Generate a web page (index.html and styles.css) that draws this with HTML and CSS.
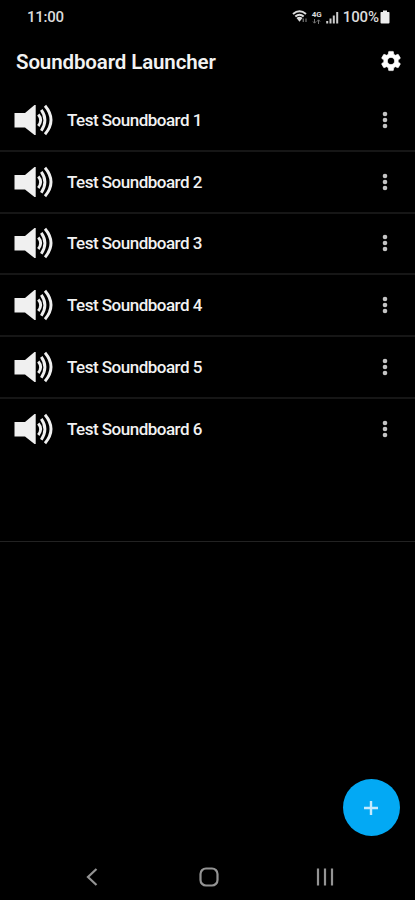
FILE: index.html
```html
<!DOCTYPE html>
<html lang="en">
<head>
  <meta charset="UTF-8">
  <meta name="viewport" content="width=device-width, initial-scale=1">
  <title>Soundboard Launcher</title>
  <link rel="stylesheet" href="styles.css">
</head>
<body>
  <!-- Shared icons -->
  <svg class="sprite">
    <symbol id="speaker" viewBox="0 0 40 32">
      <path d="M0.5 9H11L20.5 1H21.7V31H20.5L11 23.5H0.5Z" fill="#f0f0f0"/>
      <path d="M24.3 10.5Q29 16 24.3 22M27.3 5.8Q34.5 16 27.3 26.7M31 1.8Q43 16 31 30.3" fill="none" stroke="#f0f0f0" stroke-width="2.9"/>
    </symbol>
    <symbol id="dots" viewBox="0 0 6 18">
      <circle cx="3" cy="3" r="2.3"/>
      <circle cx="3" cy="9" r="2.3"/>
      <circle cx="3" cy="15" r="2.3"/>
    </symbol>
  </svg>

  <!-- Status bar -->
  <div class="status-bar">
    <span class="clock">11:00</span>
    <div class="status-icons">
      <svg class="wifi" width="17" height="14" viewBox="0 0 17 14">
        <path d="M1 4Q7.5 -1.5 14 4M3.3 6.6Q7.5 3 11.7 6.6" fill="none" stroke="#ddd" stroke-width="2"/>
        <path d="M4.5 8Q7.5 5.5 10.5 8L7.5 11.8Z" fill="#ddd"/>
        <path d="M11.3 12V8.5M14 8.5V12" stroke="#666" stroke-width="1.4"/>
      </svg>
      <div class="network">
        <b>4G</b>
        <svg width="9" height="5" viewBox="0 0 9 5">
          <path d="M2.5 0V4M1 2.5L2.5 4.2L4 2.5M6.5 5V1M5 2.5L6.5 0.8L8 2.5" fill="none" stroke="#777"/>
        </svg>
      </div>
      <svg class="signal" width="13" height="13" viewBox="0 0 13 13">
        <path d="M1.2 12.5V10M4.5 12.5V7.5M7.8 12.5V4.5M11.2 12.5V1" stroke="#ccc" stroke-width="2"/>
      </svg>
      <span class="percent">100%</span>
      <svg class="battery" width="10" height="14" viewBox="0 0 10 14">
        <path d="M3 0.5H7V2H9Q9.5 2 9.5 3V12.5Q9.5 13.5 8.5 13.5H1.5Q0.5 13.5 0.5 12.5V3Q0.5 2 1 2H3Z" fill="#eee"/>
      </svg>
    </div>
  </div>

  <!-- Header -->
  <header class="app-bar">
    <h1>Soundboard Launcher</h1>
    <svg class="settings" width="24" height="24" viewBox="0 0 24 24">
      <path fill="#fff" stroke="#fff" stroke-width="0.6" d="M19.14 12.94c.04-.3.06-.61.06-.94 0-.32-.02-.64-.07-.94l2.03-1.58c.18-.14.23-.41.12-.61l-1.92-3.32c-.12-.22-.37-.29-.59-.22l-2.39.96c-.5-.38-1.03-.7-1.62-.94l-.36-2.54c-.04-.24-.24-.41-.48-.41h-3.84c-.24 0-.43.17-.47.41l-.36 2.54c-.59.24-1.13.57-1.62.94l-2.39-.96c-.22-.08-.47 0-.59.22L2.74 8.87c-.12.21-.08.47.12.61l2.03 1.58c-.05.3-.09.63-.09.94s.02.64.07.94l-2.03 1.58c-.18.14-.23.41-.12.61l1.92 3.32c.12.22.37.29.59.22l2.39-.96c.5.38 1.03.7 1.62.94l.36 2.54c.05.24.24.41.48.41h3.84c.24 0 .44-.17.47-.41l.36-2.54c.59-.24 1.13-.56 1.62-.94l2.39.96c.22.08.47 0 .59-.22l1.92-3.32c.12-.22.07-.47-.12-.61l-2.01-1.58zM12 15.6c-1.98 0-3.6-1.62-3.6-3.6s1.62-3.6 3.6-3.6 3.6 1.62 3.6 3.6-1.62 3.6-3.6 3.6z"/>
    </svg>
  </header>

  <!-- Soundboards -->
  <main>
    <ul class="board-list">
      <li><svg class="speaker"><use href="#speaker"/></svg><span>Test Soundboard 1</span><svg class="dots"><use href="#dots"/></svg></li>
      <li><svg class="speaker"><use href="#speaker"/></svg><span>Test Soundboard 2</span><svg class="dots"><use href="#dots"/></svg></li>
      <li><svg class="speaker"><use href="#speaker"/></svg><span>Test Soundboard 3</span><svg class="dots"><use href="#dots"/></svg></li>
      <li><svg class="speaker"><use href="#speaker"/></svg><span>Test Soundboard 4</span><svg class="dots"><use href="#dots"/></svg></li>
      <li><svg class="speaker"><use href="#speaker"/></svg><span>Test Soundboard 5</span><svg class="dots"><use href="#dots"/></svg></li>
      <li><svg class="speaker"><use href="#speaker"/></svg><span>Test Soundboard 6</span><svg class="dots"><use href="#dots"/></svg></li>
    </ul>
  </main>

  <button class="add-button" aria-label="Add">
    <svg width="16" height="16" viewBox="0 0 16 16">
      <path d="M8 1V15M1 8H15" stroke="#c5eafd" stroke-width="2.4"/>
    </svg>
  </button>

  <!-- System navigation -->
  <nav class="system-nav">
    <svg width="20" height="20" viewBox="0 0 20 20"><path d="M14.5 2L6 10L14.5 18"/></svg>
    <svg width="20" height="20" viewBox="0 0 20 20"><rect x="1.5" y="1.5" width="17" height="17" rx="5.5"/></svg>
    <svg width="20" height="20" viewBox="0 0 20 20"><path d="M3 1.5V18.5M10 1.5V18.5M17 1.5V18.5"/></svg>
  </nav>
</body>
</html>
```
FILE: styles.css
```css
/* General Styles */
body {
  font-family: Roboto, sans-serif;
  margin: 0;
  height: 900px;
  background-color: #000;
  color: #f2f2f2;
  display: flex;
  flex-direction: column;
  overflow: hidden;
}

.sprite {
  display: none;
}

/* Status bar */
.status-bar {
  display: flex;
  justify-content: space-between;
  align-items: center;
  height: 34px;
  padding: 0 25px 0 27px;
  font-size: 15px;
  color: #dcdcdc;
}

.clock {
  font-weight: 500;
  letter-spacing: -0.25px;
}

.status-icons {
  display: flex;
  align-items: center;
}

.network {
  display: flex;
  flex-direction: column;
  align-items: center;
  width: 12px;
  margin: 0 3px 0 2px;
  font-size: 8px;
  line-height: 8px;
}

.percent {
  margin: 0 1px 0 4px;
  font-weight: 500;
  letter-spacing: -0.1px;
}

/* Header */
.app-bar {
  display: flex;
  justify-content: space-between;
  align-items: center;
  box-sizing: border-box;
  height: 56px;
  padding: 0 12px 2px 16px;
}

.app-bar h1 {
  margin: 1px 0 0;
  font-size: 20.5px;
  font-weight: 600;
  letter-spacing: -0.12px;
}

/* Soundboards */
main {
  height: 451px;
  border-bottom: 1px solid #222;
}

.board-list {
  list-style: none;
  margin: 0;
  padding: 0;
}

.board-list li {
  display: flex;
  align-items: center;
  box-sizing: border-box;
  height: 61.8px;
  padding: 0 27px 0 14px;
  border-bottom: 2px solid #161616;
  font-size: 17px;
  font-weight: 500;
  letter-spacing: -0.5px;
}

.board-list li:last-child {
  border-bottom-color: transparent;
}

.board-list span {
  flex: 1;
}

.speaker {
  width: 40px;
  height: 32px;
  margin-right: 13px;
}

.dots {
  width: 6px;
  height: 18px;
  fill: #c4c4c4;
}

/* Floating button */
.add-button {
  position: absolute;
  right: 15.5px;
  bottom: 64px;
  width: 57px;
  height: 57px;
  padding: 0;
  border: none;
  border-radius: 50%;
  background-color: #03a9f4;
  display: flex;
  justify-content: center;
  align-items: center;
}

/* System navigation */
.system-nav {
  display: flex;
  justify-content: space-between;
  align-items: center;
  height: 46px;
  margin-top: auto;
  padding: 0 80px 0 82px;
}

.system-nav svg {
  fill: none;
  stroke: #949494;
  stroke-width: 2.2;
}
```
